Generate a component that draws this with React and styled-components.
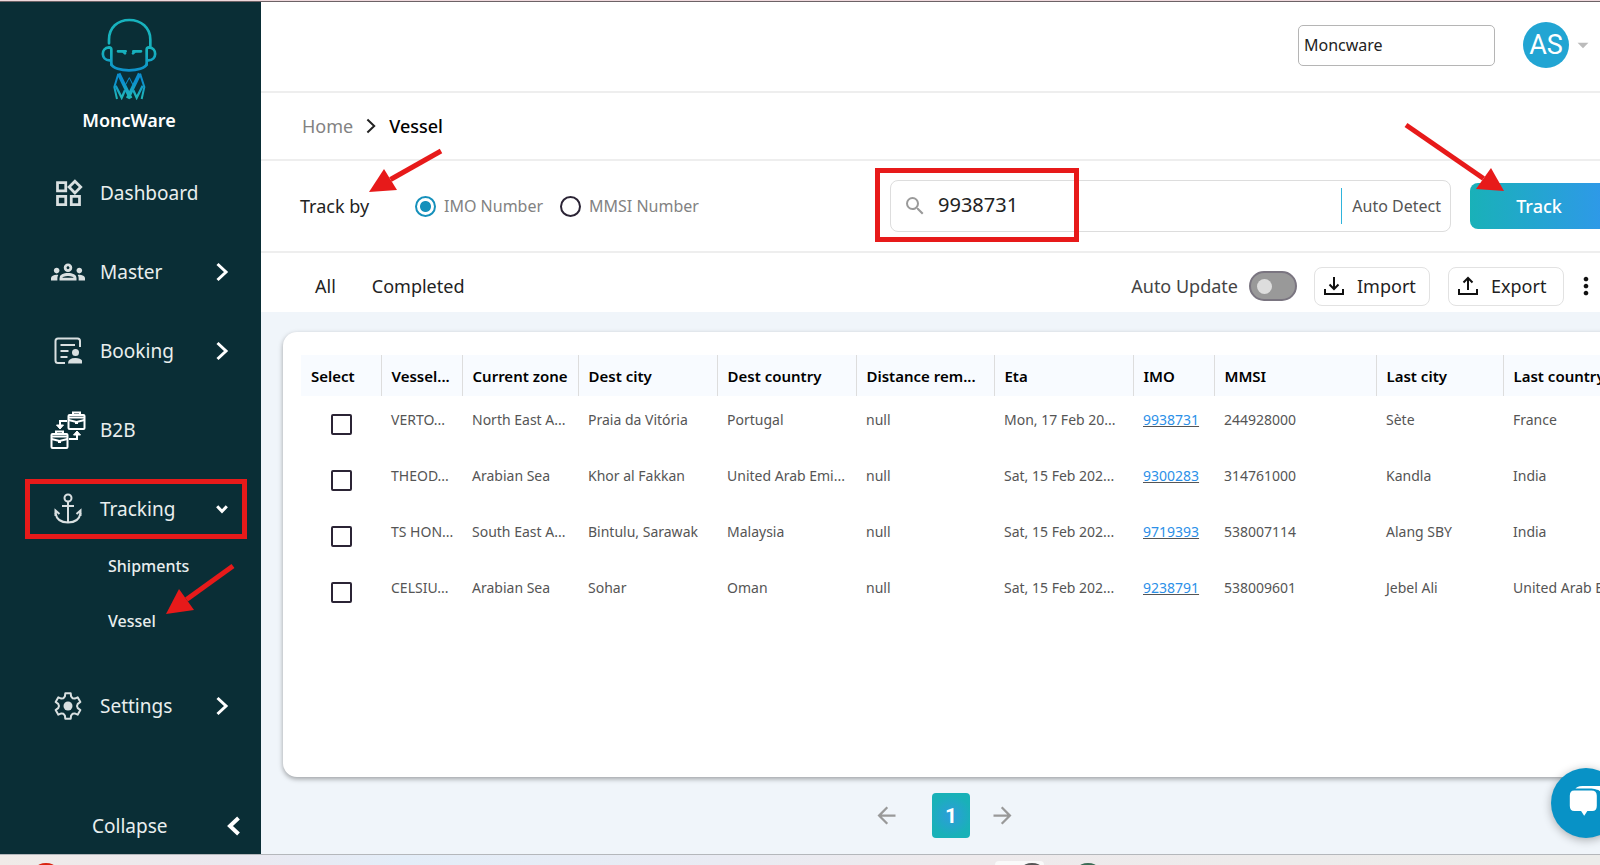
import React, { useState } from "react";
import styled, { createGlobalStyle } from "styled-components";
import {
  MdOutlineWidgets,
  MdOutlineGroups,
  MdSearch,
  MdMoreVert,
  MdArrowDropDown,
  MdArrowBack,
  MdArrowForward,
} from "react-icons/md";

const columns = [
  { key: "vessel", label: "Vessel...", width: 81 },
  { key: "zone", label: "Current zone", width: 116 },
  { key: "destCity", label: "Dest city", width: 139 },
  { key: "destCountry", label: "Dest country", width: 139 },
  { key: "distance", label: "Distance rem...", width: 138 },
  { key: "eta", label: "Eta", width: 139 },
  { key: "imo", label: "IMO", width: 81 },
  { key: "mmsi", label: "MMSI", width: 162 },
  { key: "lastCity", label: "Last city", width: 127 },
  { key: "lastCountry", label: "Last country", width: 139 },
];

const vessels = [
  {
    vessel: "VERTO...",
    zone: "North East A...",
    destCity: "Praia da Vitória",
    destCountry: "Portugal",
    distance: "null",
    eta: "Mon, 17 Feb 20...",
    imo: "9938731",
    mmsi: "244928000",
    lastCity: "Sète",
    lastCountry: "France",
  },
  {
    vessel: "THEOD...",
    zone: "Arabian Sea",
    destCity: "Khor al Fakkan",
    destCountry: "United Arab Emi...",
    distance: "null",
    eta: "Sat, 15 Feb 202...",
    imo: "9300283",
    mmsi: "314761000",
    lastCity: "Kandla",
    lastCountry: "India",
  },
  {
    vessel: "TS HON...",
    zone: "South East A...",
    destCity: "Bintulu, Sarawak",
    destCountry: "Malaysia",
    distance: "null",
    eta: "Sat, 15 Feb 202...",
    imo: "9719393",
    mmsi: "538007114",
    lastCity: "Alang SBY",
    lastCountry: "India",
  },
  {
    vessel: "CELSIU...",
    zone: "Arabian Sea",
    destCity: "Sohar",
    destCountry: "Oman",
    distance: "null",
    eta: "Sat, 15 Feb 202...",
    imo: "9238791",
    mmsi: "538009601",
    lastCity: "Jebel Ali",
    lastCountry: "United Arab Emi...",
  },
];

export default function App() {
  const [trackBy, setTrackBy] = useState("imo");
  const [query, setQuery] = useState("9938731");
  const [company, setCompany] = useState("Moncware");
  const [autoUpdate, setAutoUpdate] = useState(false);

  return (
    <Screen>
      <GlobalStyle />
      <TopEdge />
      <Body>
        <Sidebar />
        <Viewport>
          <Page>
            <Header>
              <CompanyInput
                aria-label="Company"
                value={company}
                onChange={(e) => setCompany(e.target.value)}
              />
              <Account type="button" aria-label="Account">
                <Avatar>AS</Avatar>
                <MdArrowDropDown size={26} />
              </Account>
            </Header>

            <Breadcrumb>
              <HomeLink href="#home">Home</HomeLink>
              <Chevron size={16} weight={2} />
              <Current>Vessel</Current>
            </Breadcrumb>

            <TrackRow>
              <TrackBy>
                Track by
                <Arrow width={80} height={50} left={67} top={-48} from={[74, 5]} tip={[2, 46]} head={[[17, 23], [30, 44]]} />
              </TrackBy>
              <RadioLabel>
                <Radio
                  type="radio"
                  name="trackBy"
                  checked={trackBy === "imo"}
                  onChange={() => setTrackBy("imo")}
                />
                IMO Number
              </RadioLabel>
              <RadioLabel>
                <Radio
                  type="radio"
                  name="trackBy"
                  checked={trackBy === "mmsi"}
                  onChange={() => setTrackBy("mmsi")}
                />
                MMSI Number
              </RadioLabel>
              <SearchBox>
                <MdSearch size={24} color="#9a9a9a" />
                <SearchInput
                  aria-label="Search number"
                  value={query}
                  onChange={(e) => setQuery(e.target.value)}
                />
                <AutoDetect type="button">Auto Detect</AutoDetect>
                <SearchMark />
              </SearchBox>
              <TrackButton type="button">
                Track
                <Arrow width={104} height={72} left={-67} top={-61} from={[3, 3]} tip={[101, 69]} head={[[88, 46], [73, 67]]} />
              </TrackButton>
            </TrackRow>

            <Toolbar>
              <Tab type="button">All</Tab>
              <Tab type="button">Completed</Tab>
              <Spacer />
              <ToggleLabel>
                Auto Update
                <Toggle
                  type="checkbox"
                  checked={autoUpdate}
                  onChange={(e) => setAutoUpdate(e.target.checked)}
                />
              </ToggleLabel>
              <ToolButton type="button">
                <TrayIcon />
                Import
              </ToolButton>
              <ToolButton type="button">
                <TrayIcon up />
                Export
              </ToolButton>
              <IconButton type="button" aria-label="More">
                <MdMoreVert size={28} />
              </IconButton>
            </Toolbar>

            <Content>
              <Card>
                <VesselTable />
              </Card>
              <Pagination>
                <IconButton type="button" aria-label="Previous page">
                  <MdArrowBack size={27} color="#999" />
                </IconButton>
                <PageButton type="button">1</PageButton>
                <IconButton type="button" aria-label="Next page">
                  <MdArrowForward size={27} color="#999" />
                </IconButton>
              </Pagination>
            </Content>
          </Page>
          <ChatButton type="button" aria-label="Chat">
            <svg width="36" height="36" viewBox="0 0 40 40" fill="#fff">
              <path d="M8 5q1-4 8-4h18q6 0 6 7v13q0 4-3 6V12q0-7-6-7z" />
              <path
                d="M7 5h19q7 0 7 7v11q0 7-6 7h-5l-4 6-4-6H7q-6 0-6-7V12q0-7 6-7z"
                stroke="#0892c6"
                strokeWidth="2"
              />
            </svg>
          </ChatButton>
        </Viewport>
      </Body>
      <Taskbar>
        <svg width="100%" height="10" aria-hidden="true">
          <ellipse cx="46" cy="12" rx="9" ry="4" fill="#d9230f" />
          <rect x="995" y="6" width="49" height="14" rx="4" fill="#fafafa" />
          <ellipse cx="1032" cy="12" rx="9" ry="4" fill="#555" />
          <ellipse cx="1088" cy="12" rx="9" ry="4" fill="#3b6b55" />
        </svg>
      </Taskbar>
    </Screen>
  );
}

function Sidebar() {
  return (
    <Side>
      <Brand>
        <Logo />
        MoncWare
      </Brand>
      <Nav>
        <NavItem href="#dashboard">
          <NavIcon><MdOutlineWidgets size={33} /></NavIcon>
          Dashboard
        </NavItem>
        <NavItem href="#master">
          <NavIcon><MdOutlineGroups size={34} /></NavIcon>
          Master
          <Chevron size={20} weight={3} />
        </NavItem>
        <NavItem href="#booking">
          <NavIcon><BookingIcon /></NavIcon>
          Booking
          <Chevron size={20} weight={3} />
        </NavItem>
        <NavItem href="#b2b">
          <NavIcon><B2BIcon /></NavIcon>
          B2B
        </NavItem>
        <NavItem href="#tracking" $marked>
          <NavIcon><AnchorIcon /></NavIcon>
          Tracking
          <Chevron size={12} weight={3} turn={90} />
        </NavItem>
        <SubMenu>
          <SubItem href="#shipments">Shipments</SubItem>
          <SubItem href="#vessel">
            Vessel
            <Arrow width={74} height={56} left={164} top={-31} from={[69, 3]} tip={[2, 51]} head={[[15, 26], [30, 47]]} />
          </SubItem>
        </SubMenu>
        <NavItem href="#settings">
          <NavIcon><GearIcon /></NavIcon>
          Settings
          <Chevron size={20} weight={3} />
        </NavItem>
      </Nav>
      <Collapse type="button">
        Collapse
        <Chevron size={20} weight={4} turn={180} />
      </Collapse>
    </Side>
  );
}

function VesselTable() {
  return (
    <Table>
      <colgroup>
        <col width={80} />
        {columns.map((c) => (
          <col key={c.key} width={c.width} />
        ))}
      </colgroup>
      <thead>
        <tr>
          <Th>Select</Th>
          {columns.map((c) => (
            <Th key={c.key}>{c.label}</Th>
          ))}
        </tr>
      </thead>
      <tbody>
        {vessels.map((row) => (
          <tr key={row.imo}>
            <SelectCell>
              <Checkbox type="checkbox" aria-label={"Select " + row.imo} />
            </SelectCell>
            {columns.map((c) => (
              <Td key={c.key}>
                {c.key === "imo" ? <ImoLink href={"#" + row.imo}>{row.imo}</ImoLink> : row[c.key]}
              </Td>
            ))}
          </tr>
        ))}
      </tbody>
    </Table>
  );
}

function Arrow({ width, height, left, top, from, tip, head }) {
  const mid = [(head[0][0] + head[1][0]) / 2, (head[0][1] + head[1][1]) / 2];
  return (
    <ArrowSvg width={width} height={height} $left={left} $top={top} aria-hidden="true">
      <line x1={from[0]} y1={from[1]} x2={mid[0]} y2={mid[1]} stroke="#e71a1a" strokeWidth="5" />
      <polygon points={[tip, head[0], head[1]].join(" ")} fill="#e71a1a" />
    </ArrowSvg>
  );
}

function Chevron({ size, weight, turn = 0 }) {
  return (
    <svg className="chevron" width={size} height={size} viewBox="-10 -10 20 20" fill="none" stroke="currentColor" strokeWidth={(weight * 20) / size}>
      <path d="M-4.500 -8L4 0L-4.500 8" transform={`rotate(${turn})`} />
    </svg>
  );
}

function TrayIcon({ up }) {
  return (
    <svg width="20" height="20" viewBox="0 0 20 20" fill="none" stroke="#111" strokeWidth="2">
      <path d="M1 13v5h18v-5" />
      {up ? <path d="M10 14V2M5.500 6.500L10 2l4.500 4.500" /> : <path d="M10 1v12M5.500 8.500L10 13l4.500-4.500" />}
    </svg>
  );
}

function Logo() {
  return (
    <svg width="58" height="82" viewBox="301 53 174 246" fill="none" strokeWidth="8">
      <defs>
        <linearGradient id="head" gradientUnits="userSpaceOnUse" x1="0" y1="60" x2="0" y2="214">
          <stop offset="0.6" stopColor="#17b2bd" />
          <stop offset="1" stopColor="#0d8fcb" />
        </linearGradient>
        <linearGradient id="robe" gradientUnits="userSpaceOnUse" x1="0" y1="220" x2="0" y2="296">
          <stop offset="0.3" stopColor="#0b8fcf" />
          <stop offset="0.9" stopColor="#1fb5ba" />
        </linearGradient>
      </defs>
      <g stroke="url(#head)" strokeLinecap="round">
        <path d="M328 129V118C328 82 354 59 389 59S452 82 452 118V138" />
        <path d="M335 193V148Q335 141 328 141C303 143 303 179 330 180" />
        <path d="M441 193V148Q441 141 448 141C473 143 473 179 446 180" />
        <path d="M335 192C344 216 432 216 441 192" />
        <path d="M355 153H378M401 153H424" />
        <path d="M372 155l4 4M404 155l-4 4" />
      </g>
      <g stroke="url(#robe)">
        <path d="M356 220L344 260L352 296" strokeWidth="6" />
        <path d="M421 220L434 260L426 296" strokeWidth="6" />
        <path d="M357 220L393 294M420 220L384 294" strokeWidth="11" />
        <path d="M348 256L366 292L376 270M429 256L411 292L401 270" strokeWidth="7" />
        <path d="M377 254L389 232L400 254" strokeWidth="3" />
      </g>
    </svg>
  );
}

function BookingIcon() {
  return (
    <svg width="28" height="28" viewBox="0 0 28 28" fill="none" stroke="currentColor" strokeWidth="2">
      <path d="M26 10V4q0-2.500-2.500-2.500H4Q1.500 1.500 1.500 4v19.500Q1.500 26 4 26h7" />
      <path d="M6.500 8H21M6.500 14h8M6.500 20h7" />
      <circle cx="21.500" cy="15.500" r="3.500" fill="currentColor" stroke="none" />
      <path d="M14 26.500q0-5.500 7.500-5.500t7 5.500z" fill="currentColor" stroke="none" />
    </svg>
  );
}

function B2BIcon() {
  return (
    <svg width="36" height="38" viewBox="0 0 36 38" fill="none" stroke="#fff" strokeWidth="2">
      <rect x="18.500" y="4" width="16" height="14" rx="1" />
      <path d="M23 4V1.500h7V4M18.500 6.500h16M18.500 9l8 2 8-2" />
      <rect x="1.500" y="23" width="16" height="14" rx="1" />
      <path d="M6 23v-2.500h7V23M1.500 25.500h16M1.500 28l8 2 8-2" />
      <path d="M17 10h-7v5M19 28h8v-5" />
      <path d="M6.500 14l3.500 4 3.500-4zM23.500 24l3.500-4 3.500 4z" fill="#fff" strokeWidth="1" />
      <path d="M25 11h3v2h-3zM8 30h3v2H8z" fill="#fff" stroke="none" />
    </svg>
  );
}

function AnchorIcon() {
  return (
    <svg width="28" height="32" viewBox="0 0 28 32" fill="none" stroke="currentColor" strokeWidth="2">
      <circle cx="14" cy="5" r="3.500" />
      <path d="M14 8.500V30M8 13h12" />
      <path d="M1.500 23V17.500l4 3.500M26.500 23V17.500l-4 3.500" />
      <path d="M1.500 20Q3 29.500 14 29.500T26.500 20" />
    </svg>
  );
}

function GearIcon() {
  const points = [];
  for (let i = 0; i < 6; i++) {
    [[-12, 13], [12, 13], [18, 10], [30, 9], [42, 10]].forEach(([deg, r]) => {
      const a = ((i * 60 + deg - 90) * Math.PI) / 180;
      points.push([14 + r * Math.cos(a), 14 + r * Math.sin(a)].join(","));
    });
  }
  return (
    <svg width="28" height="28" viewBox="0 0 28 28" fill="none" stroke="currentColor" strokeWidth="2" strokeLinejoin="round">
      <polygon points={points.join(" ")} />
      <circle cx="14" cy="14" r="4.500" fill="currentColor" stroke="none" />
    </svg>
  );
}

const GlobalStyle = createGlobalStyle`
  * {
    box-sizing: border-box;
  }
  body {
    margin: 0;
    overflow: hidden;
    font-family: "Noto Sans", sans-serif;
    color: #222;
  }
  button, input {
    font-family: inherit;
    color: inherit;
    margin: 0;
  }
  button {
    cursor: pointer;
    padding: 0;
    border: 0;
    background: none;
  }
  svg {
    flex: none;
  }
`;

const Screen = styled.div`
  display: flex;
  flex-direction: column;
  min-height: 100vh;
`;

const TopEdge = styled.div`
  height: 2px;
  background: #efd9dd;
  border-bottom: 1px solid #6d6266;
`;

const Body = styled.div`
  display: flex;
  flex: 1;
`;

const Side = styled.aside`
  display: flex;
  flex-direction: column;
  flex: none;
  width: 261px;
  background: #0a2e36;
  color: #e9eeee;
  font-size: 19px;
`;

const Brand = styled.div`
  display: flex;
  flex-direction: column;
  align-items: center;
  gap: 6px;
  height: 161px;
  padding-top: 16px;
  padding-right: 3px;
  color: #fff;
  font-weight: 600;
  font-size: 18px;
  line-height: 28px;
`;

const Nav = styled.nav`
  display: flex;
  flex-direction: column;
`;

const NavItem = styled.a`
  display: flex;
  align-items: center;
  height: 60px;
  margin: 0 14px ${(p) => (p.$marked ? 0 : 19)}px 25px;
  padding: 0 ${(p) => (p.$marked ? 10 : 15)}px 0 ${(p) => (p.$marked ? 19 : 24)}px;
  border: ${(p) => (p.$marked ? "5px solid #e71a1a" : "0")};
  color: inherit;
  text-decoration: none;

  .chevron {
    width: 20px;
    margin-left: auto;
    color: #fff;
  }
`;

const NavIcon = styled.span`
  display: flex;
  justify-content: center;
  width: 38px;
  margin-right: 13px;
  color: #d9e0e1;
`;

const SubMenu = styled.div`
  display: flex;
  flex-direction: column;
  margin-bottom: 27px;
`;

const SubItem = styled.a`
  position: relative;
  padding-left: 108px;
  color: inherit;
  font-size: 16px;
  font-weight: 500;
  line-height: 55px;
  text-decoration: none;
`;

const Collapse = styled.button`
  display: flex;
  align-items: center;
  justify-content: space-between;
  height: 56px;
  margin-top: auto;
  padding: 0 17px 0 92px;
  font-size: 19px;

  .chevron {
    color: #fff;
  }
`;

const Viewport = styled.main`
  position: relative;
  flex: 1;
  min-width: 0;
  overflow: hidden;
`;

// wider than the window, the right edge is cut off
const Page = styled.div`
  display: flex;
  flex-direction: column;
  width: calc(100% + 32px);
  height: 100%;
  background: #fff;
`;

const Header = styled.header`
  display: flex;
  align-items: center;
  justify-content: flex-end;
  height: 91px;
  padding: 0 36px 3px 0;
  border-bottom: 2px solid #eee;
`;

const CompanyInput = styled.input`
  width: 197px;
  height: 41px;
  margin-right: 28px;
  padding: 0 5px;
  border: 1px solid #b5b5b5;
  border-radius: 5px;
  font-size: 16px;
  background: #fff;
`;

const Account = styled.button`
  display: flex;
  align-items: center;
  gap: 1px;
  color: #bbb;
`;

const Avatar = styled.span`
  width: 46px;
  border-radius: 50%;
  background: #22a5d3;
  color: #fff;
  font-family: Roboto, sans-serif;
  font-size: 27px;
  line-height: 46px;
`;

const Breadcrumb = styled.nav`
  display: flex;
  align-items: center;
  gap: 10px;
  height: 68px;
  padding: 0 41px;
  border-bottom: 2px solid #eee;
  font-size: 18px;
`;

const HomeLink = styled.a`
  color: #828282;
  text-decoration: none;
`;

const Current = styled.span`
  color: #000;
  font-weight: 500;
`;

const TrackRow = styled.section`
  display: flex;
  align-items: center;
  height: 92px;
  padding: 0 24px 0 39px;
  border-bottom: 2px solid #eee;
`;

const TrackBy = styled.div`
  position: relative;
  width: 115px;
  font-size: 18px;
`;

const RadioLabel = styled.label`
  display: flex;
  align-items: center;
  gap: 8px;
  width: 145px;
  white-space: nowrap;
  color: #828282;
  font-size: 16px;
`;

const Radio = styled.input`
  appearance: none;
  flex: none;
  width: 21px;
  height: 21px;
  border: 2px solid #2b2435;
  border-radius: 50%;

  &:checked {
    border-color: #1590bb;
    background: radial-gradient(circle, #1590bb 5px, #fff 6px);
  }
`;

const SearchBox = styled.div`
  position: relative;
  display: flex;
  align-items: center;
  width: 561px;
  height: 52px;
  margin-left: auto;
  padding: 0 9px 0 12px;
  border: 1px solid #ddd;
  border-radius: 8px;
`;

const SearchInput = styled.input`
  flex: 1;
  min-width: 0;
  height: 40px;
  padding: 0 11px 4px;
  border: 0;
  outline: 0;
  background: none;
  font-size: 20px;
`;

const AutoDetect = styled.button`
  height: 36px;
  padding-left: 10px;
  border-left: 1px solid #2fb4dc;
  color: #555;
  font-size: 16px;
`;

const SearchMark = styled.div`
  position: absolute;
  left: -16px;
  top: -13px;
  width: 204px;
  height: 74px;
  border: 5px solid #e71a1a;
`;

const TrackButton = styled.button`
  position: relative;
  width: 138px;
  height: 46px;
  margin-left: 19px;
  border-radius: 8px;
  background: linear-gradient(90deg, #19b1b8, #2f98ea);
  color: #fff;
  font-size: 18px;
  font-weight: 500;
`;

const ArrowSvg = styled.svg`
  position: absolute;
  left: ${(p) => p.$left}px;
  top: ${(p) => p.$top}px;
  z-index: 2;
  pointer-events: none;
`;

const Toolbar = styled.section`
  display: flex;
  align-items: center;
  height: 59px;
  padding: 7px 32px 0 54px;
  font-size: 18px;
`;

const Tab = styled.button`
  margin-right: 36px;
  font-size: 18px;
`;

const Spacer = styled.div`
  flex: 1;
`;

const ToggleLabel = styled.label`
  display: flex;
  align-items: center;
  gap: 11px;
  margin-right: 17px;
  color: #444;
`;

const Toggle = styled.input`
  appearance: none;
  width: 48px;
  height: 30px;
  padding: 6px;
  border: 2px solid #7a7580;
  border-radius: 15px;
  background: #999;

  &::before {
    content: "";
    display: block;
    width: 15px;
    height: 15px;
    border-radius: 50%;
    background: #ddd;
  }

  &:checked::before {
    margin-left: auto;
  }
`;

const ToolButton = styled.button`
  display: flex;
  align-items: center;
  gap: 13px;
  width: 116px;
  height: 39px;
  margin-right: 18px;
  padding-left: 9px;
  border: 1px solid #e2e2e2;
  border-radius: 8px;
  font-size: 18px;

  & + & {
    margin-right: 8px;
  }
`;

const IconButton = styled.button`
  display: flex;
  margin-right: 0;
  color: #111;
`;

const Content = styled.section`
  display: flex;
  flex-direction: column;
  flex: 1;
  padding: 20px 0 0 22px;
  background: #f0f5fa;
`;

const Card = styled.div`
  flex: 1;
  padding: 23px 0 0 18px;
  border-radius: 14px 0 0 14px;
  background: #fff;
  box-shadow: 0 2px 5px rgba(0, 0, 0, 0.35);
`;

const Table = styled.table`
  width: 1341px;
  table-layout: fixed;
  border-collapse: collapse;
`;

const Th = styled.th`
  height: 41px;
  padding: 0 0 0 10px;
  border-right: 1px solid #ddd;
  background: #f8fbff;
  color: #000;
  font-size: 15px;
  font-weight: 600;
  text-align: left;
  white-space: nowrap;
  overflow: hidden;
`;

const Td = styled.td`
  height: 56px;
  padding: 0 0 10px 10px;
  color: #555;
  font-size: 14px;
  white-space: nowrap;
  overflow: hidden;
`;

const SelectCell = styled(Td)`
  padding: 0;
  text-align: center;
`;

const Checkbox = styled.input`
  appearance: none;
  width: 21px;
  height: 21px;
  border: 2px solid #2b2435;
  border-radius: 2px;
  vertical-align: middle;

  &:checked {
    background: #1590bb;
  }
`;

const ImoLink = styled.a`
  color: #2b90e8;
  text-decoration: underline #555;
`;

const Pagination = styled.div`
  display: flex;
  align-items: center;
  justify-content: center;
  height: 77px;
  padding-right: 26px;
`;

const PageButton = styled.button`
  width: 38px;
  height: 45px;
  margin: 0 19px 0 32px;
  border-radius: 4px;
  background: radial-gradient(circle, #2d9cdb, #19b1b8 70%);
  color: #fff;
  font-family: Roboto, sans-serif;
  font-size: 21px;
  font-weight: 700;
`;

const ChatButton = styled.button`
  position: absolute;
  right: -21px;
  bottom: 16px;
  display: flex;
  align-items: center;
  justify-content: center;
  width: 70px;
  height: 70px;
  border-radius: 50%;
  background: #0892c6;
  box-shadow: 0 2px 10px rgba(0, 0, 0, 0.3);
`;

const Taskbar = styled.footer`
  height: 11px;
  border-top: 1px solid #b4b7bb;
  background: linear-gradient(90deg, #f0ebe8, #ebe8ef 14%, #e3edf8 25%, #e9ebf3 45%, #eeeaec 60%, #ececea);
  overflow: hidden;

  svg {
    display: block;
  }
`;
